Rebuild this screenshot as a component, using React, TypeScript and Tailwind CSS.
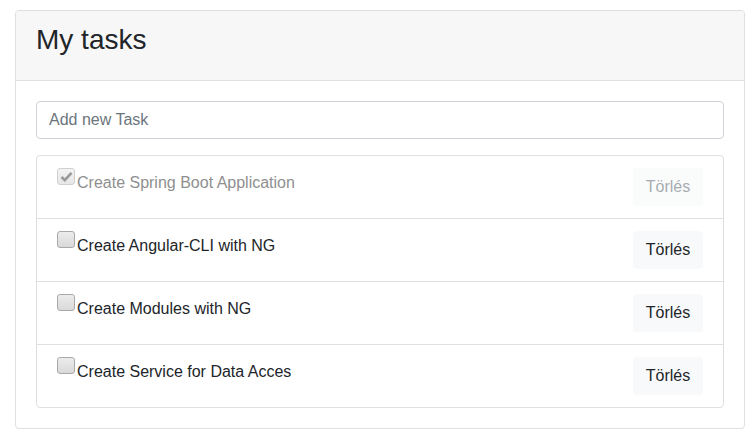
const tasks = [
  { title: "Create Spring Boot Application", done: true },
  { title: "Create Angular-CLI with NG", done: false },
  { title: "Create Modules with NG", done: false },
  { title: "Create Service for Data Acces", done: false },
];

function Checkbox({ checked }: { checked: boolean }) {
  return (
    <span
      className={`flex shrink-0 w-[18px] h-[17px] items-center justify-center rounded-[3px] border ${
        checked
          ? "border-[#d0d0d0] bg-gradient-to-b from-[#f4f4f4] to-[#e6e6e6]"
          : "border-[#a9a9a9] bg-gradient-to-b from-[#ececec] to-[#d9d9d9]"
      }`}
    >
      {checked && (
        <svg width="13" height="11" viewBox="0 0 13 11">
          <path
            d="M1.5 6 L4.8 9.2 L11.5 1.8"
            fill="none"
            stroke="#9a9a9a"
            strokeWidth="2.6"
          />
        </svg>
      )}
    </span>
  );
}

export default function App() {
  return (
    <div className="min-h-[447px] bg-white pl-[15px] pr-[11px] pt-[10px] font-['Liberation_Sans',Arial,sans-serif] text-[#212529]">
      <div className="rounded border border-[#dfdfdf]">
        <div className="border-b border-[#dfdfdf] bg-[#f7f7f7] px-5 pt-3 pb-[15px] rounded-t">
          <h3 className="text-[28px] leading-[1.2] mb-2">My tasks</h3>
        </div>
        <div className="p-5">
          <input
            type="text"
            placeholder="Add new Task"
            className="block w-full h-[38px] rounded border border-[#ced4da] px-3 text-base text-[#495057] placeholder:text-[#6c757d] outline-none"
          />
          <ul className="mt-4 rounded border border-[#dfdfdf]">
            {tasks.map((t, i) => (
              <li
                key={t.title}
                className={`flex items-start justify-between px-5 py-3 ${
                  i > 0 ? "border-t border-[#dfdfdf]" : ""
                }`}
              >
                <label
                  className={`flex items-start text-base leading-6 ${
                    t.done ? "text-[#8f8f8f]" : "text-[#212529]"
                  }`}
                >
                  <Checkbox checked={t.done} />
                  <span className="mt-[3px] ml-[2px]">{t.title}</span>
                </label>
                <button
                  type="button"
                  className={`h-[38px] w-[70px] rounded bg-[#f8f9fa] text-base ${
                    t.done ? "opacity-60 text-[#6c757d]" : "text-[#212529]"
                  }`}
                >
                  Törlés
                </button>
              </li>
            ))}
          </ul>
        </div>
      </div>
    </div>
  );
}
